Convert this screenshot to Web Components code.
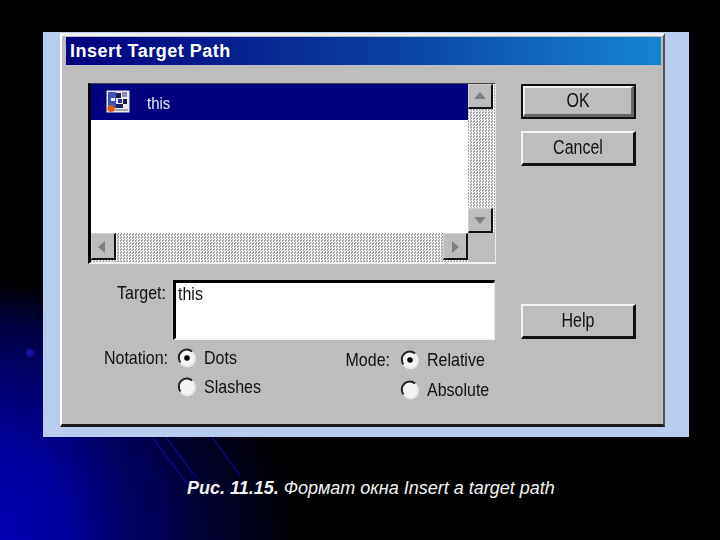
<!DOCTYPE html>
<html>
<head>
<meta charset="utf-8">
<title>Insert Target Path</title>
<style>
  html, body { margin: 0; background: #000; }
</style>
</head>
<body>
<slide-page>
  <picture-panel>
    <win-dialog title="Insert Target Path"></win-dialog>
  </picture-panel>
  <slide-caption>
    <b slot="num">Рис. 11.15.</b>
    <span slot="text">Формат окна Insert a target path</span>
  </slide-caption>
</slide-page>

<script>
const UI_FONT = '"Liberation Sans", Arial, sans-serif';
const SUNKEN = 'border-style: solid; border-width: 3px 1px 2px 3px; border-color: #000 #e8e8e8 #f4f4f4 #000;';

class SlidePage extends HTMLElement {
  constructor() {
    super();
    this.attachShadow({ mode: 'open' });
    this.shadowRoot.innerHTML = `
      <style>
        :host {
          display: block;
          position: relative;
          width: 720px;
          height: 540px;
          box-sizing: border-box;
          padding: 32px 31px 0 43px;
          overflow: hidden;
          background:
            radial-gradient(ellipse 190px 260px at 0px 540px, #0000b4 0%, #00009c 35%, #00005e 70%, rgba(0,0,40,0) 100%),
            radial-gradient(ellipse 300px 250px at 0px 540px, #00007a 0%, #000048 55%, rgba(0,0,0,0) 100%),
            #000;
        }
        svg { position: absolute; left: 0; top: 0; }
        .top { position: relative; }
      </style>
      <svg width="720" height="540" viewBox="0 0 720 540">
        <defs>
          <radialGradient id="dot">
            <stop offset="0" stop-color="#1a1ab0"/>
            <stop offset="0.55" stop-color="#10109a"/>
            <stop offset="1" stop-color="#000060" stop-opacity="0"/>
          </radialGradient>
        </defs>
        <circle cx="30" cy="353" r="6" fill="url(#dot)"/>
        <g fill="none" stroke="#0c0c9a" stroke-width="1.6" opacity=".7">
          <path d="M152 437 L192 490"/>
          <path d="M166 437 L196 478"/>
          <path d="M212 437 L240 476"/>
        </g>
      </svg>
      <div class="top"><slot></slot></div>
    `;
  }
}

class PicturePanel extends HTMLElement {
  constructor() {
    super();
    this.attachShadow({ mode: 'open' });
    this.shadowRoot.innerHTML = `
      <style>
        :host {
          display: block;
          width: 646px;
          height: 405px;
          box-sizing: border-box;
          padding: 1px 24px 10px 17px;
          background: #b8ccf0;
        }
      </style>
      <slot></slot>
    `;
  }
}

class WinDialog extends HTMLElement {
  constructor() {
    super();
    this.attachShadow({ mode: 'open' });
    this.shadowRoot.innerHTML = `
      <style>
        :host {
          display: block;
          box-sizing: border-box;
          height: 394px;
          background: #bdbdbd;
          border-style: solid;
          border-width: 3px 2px 3px 2px;
          border-color: #f0f0f0 #545454 #1a1a1a #fff;
          font-family: ${UI_FONT};
        }
        .title {
          margin: 1px 2px 0 4px;
          height: 28px;
          box-sizing: border-box;
          padding: 1px 0 0 4px;
          display: flex;
          align-items: center;
          background: linear-gradient(90deg, #000080 0%, #0a3a9c 50%, #1484d0 100%);
          color: #fff;
          font-weight: bold;
          font-size: 18px;
          letter-spacing: .5px;
        }
        .body {
          display: grid;
          grid-template-columns: 408px 115px;
          column-gap: 25px;
          padding: 18px 0 0 26px;
        }
        .left { display: flex; flex-direction: column; }
        .right { display: flex; flex-direction: column; gap: 12px; height: 255px; margin-top: 1px; }
        .right win-button:last-child { margin-top: auto; }
        .target { display: flex; margin-top: 16px; }
        .target-label {
          width: 78px;
          padding-top: 4px;
          text-align: right;
          margin-right: 7px;
        }
        .field {
          box-sizing: border-box;
          width: 322px;
          height: 60px;
          background: #fff;
          ${SUNKEN}
          padding: 2px 0 0 2px;
        }
        .options {
          display: grid;
          grid-template-columns: 75px 146px 76px auto;
          column-gap: 0;
          margin-top: 5px;
          padding-left: 5px;
        }
        .group-label { text-align: right; padding-top: 4px; }
        .group { display: flex; flex-direction: column; gap: 5px; padding: 1px 0 0 9px; }
        .group.mode { gap: 6px; padding: 3px 0 0 10px; }
        .group-label.mode { padding-top: 6px; }
        .t {
          display: inline-block;
          font-size: 16px;
          color: #111;
          transform: scaleY(1.2);
          filter: blur(.25px);
        }
      </style>
      <div class="title"><span>${this.getAttribute('title')}</span></div>
      <div class="body">
        <div class="left">
          <list-box></list-box>
          <div class="target">
            <div class="target-label"><span class="t">Target:</span></div>
            <div class="field"><span class="t">this</span></div>
          </div>
          <div class="options">
            <div class="group-label"><span class="t">Notation:</span></div>
            <div class="group">
              <radio-option checked>Dots</radio-option>
              <radio-option>Slashes</radio-option>
            </div>
            <div class="group-label mode"><span class="t">Mode:</span></div>
            <div class="group mode">
              <radio-option checked>Relative</radio-option>
              <radio-option>Absolute</radio-option>
            </div>
          </div>
        </div>
        <div class="right">
          <win-button default>OK</win-button>
          <win-button>Cancel</win-button>
          <win-button>Help</win-button>
        </div>
      </div>
    `;
  }
}

class ListBox extends HTMLElement {
  constructor() {
    super();
    this.attachShadow({ mode: 'open' });
    this.shadowRoot.innerHTML = `
      <style>
        :host {
          display: grid;
          box-sizing: border-box;
          width: 408px;
          height: 181px;
          ${SUNKEN}
          border-width: 1px 1px 2px 3px;
          border-top-color: #444;
          grid-template-columns: 1fr 27px;
          grid-template-rows: 1fr 29px;
          background: #fff;
        }
        .items { min-width: 0; }
        .row {
          height: 36px;
          background: #000080;
          color: #e8e8f0;
          display: flex;
          align-items: center;
          padding-left: 15px;
          gap: 17px;
        }
        .row svg { display: block; filter: blur(.4px); }
        .row span {
          font-size: 15px;
          transform: scaleY(1.1);
          filter: blur(.3px);
        }
        .track {
          background: repeating-conic-gradient(#f6f6f6 0 25%, #a4a4a4 0 50%) 0 0 / 3px 3px;
          display: flex;
          justify-content: space-between;
        }
        .track.v { flex-direction: column; }
        .corner { background: #bdbdbd; }
      </style>
      <div class="items">
        <div class="row">
          <svg width="24" height="24" viewBox="0 0 24 24">
            <rect x=".5" y=".5" width="23" height="22" fill="#e8e8ee"/>
            <rect x="2" y="2" width="8" height="16" fill="#3f54b8"/>
            <rect x="10" y="3" width="5" height="5" fill="#1c1c50"/>
            <rect x="16" y="2" width="5" height="5" fill="#8a8ab0"/>
            <rect x="12" y="9" width="4" height="4" fill="#30309a"/>
            <rect x="17" y="9" width="4" height="5" fill="#181838"/>
            <rect x="5" y="8" width="4" height="3" fill="#f0f0ff"/>
            <rect x="10" y="14" width="7" height="4" fill="#20205a"/>
            <rect x="3" y="19" width="19" height="2" fill="#a8a8b0"/>
            <circle cx="5" cy="18.5" r="3.6" fill="#e25a10"/>
          </svg>
          <span>this</span>
        </div>
      </div>
      <div class="track v">
        <scroll-arrow dir="up"></scroll-arrow>
        <scroll-arrow dir="down"></scroll-arrow>
      </div>
      <div class="track">
        <scroll-arrow dir="left"></scroll-arrow>
        <scroll-arrow dir="right"></scroll-arrow>
      </div>
      <div class="corner"></div>
    `;
  }
}

class ScrollArrow extends HTMLElement {
  constructor() {
    super();
    this.attachShadow({ mode: 'open' });
    const paths = {
      up: 'M9 4 L3 11 L15 11 Z',
      down: 'M3 5 L15 5 L9 12 Z',
      left: 'M11 3 L4 9 L11 15 Z',
      right: 'M6 3 L13 9 L6 15 Z'
    };
    const dir = this.getAttribute('dir');
    const flat = dir === 'left' || dir === 'right';
    this.shadowRoot.innerHTML = `
      <style>
        :host {
          display: flex;
          align-items: center;
          justify-content: center;
          box-sizing: border-box;
          width: 25px;
          height: ${flat ? 27 : 25}px;
          background: #bdbdbd;
          border-style: solid;
          border-width: 1px 2px 2px 1px;
          border-color: #cfcfcf #111 #111 #cfcfcf;
        }
      </style>
      <svg width="18" height="16" viewBox="0 0 18 16"><path d="${paths[dir]}" fill="#808080"/></svg>
    `;
  }
}

class WinButton extends HTMLElement {
  constructor() {
    super();
    this.attachShadow({ mode: 'open' });
    this.shadowRoot.innerHTML = `
      <style>
        :host {
          display: flex;
          align-items: center;
          justify-content: center;
          box-sizing: border-box;
          height: 35px;
          background: #bdbdbd;
          border-style: solid;
          border-width: 2px 3px 3px 2px;
          border-color: #f4f4f4 #111 #111 #f4f4f4;
          font-size: 16px;
          color: #111;
        }
        :host([default]) {
          outline: 2px solid #111;
          outline-offset: -2px;
          border-width: 4px 5px 5px 4px;
          border-color: #efefef #666 #666 #efefef;
        }
        span { display: inline-block; transform: scaleY(1.25); filter: blur(.25px); margin-top: -1px; }
      </style>
      <span><slot></slot></span>
    `;
  }
}

class RadioOption extends HTMLElement {
  constructor() {
    super();
    this.attachShadow({ mode: 'open' });
    const dot = this.hasAttribute('checked') ? '<circle cx="10" cy="10" r="2.8" fill="#000"/>' : '';
    this.shadowRoot.innerHTML = `
      <style>
        :host {
          display: flex;
          align-items: center;
          gap: 7px;
          height: 24px;
          font-size: 16px;
          color: #111;
        }
        svg { display: block; flex: none; }
        span { display: inline-block; transform: scaleY(1.2); filter: blur(.25px); }
      </style>
      <svg width="20" height="20" viewBox="0 0 20 20">
        <circle cx="10" cy="10" r="8.5" fill="#f4f4f4"/>
        <path d="M3.5 14.5 A8 8 0 0 1 15 3.5" fill="none" stroke="#222" stroke-width="2"/>
        <path d="M16.5 5.5 A8 8 0 0 1 5 16.5" fill="none" stroke="#e4e4e4" stroke-width="2"/>
        ${dot}
      </svg>
      <span><slot></slot></span>
    `;
  }
}

class SlideCaption extends HTMLElement {
  constructor() {
    super();
    this.attachShadow({ mode: 'open' });
    this.shadowRoot.innerHTML = `
      <style>
        :host {
          display: block;
          margin-top: 41px;
          padding-left: 144px;
          color: #f4f4f4;
          font: italic 18px ${UI_FONT};
          white-space: nowrap;
        }
      </style>
      <slot name="num"></slot>
      <slot name="text"></slot>
    `;
  }
}

customElements.define('slide-page', SlidePage);
customElements.define('picture-panel', PicturePanel);
customElements.define('scroll-arrow', ScrollArrow);
customElements.define('list-box', ListBox);
customElements.define('win-button', WinButton);
customElements.define('radio-option', RadioOption);
customElements.define('win-dialog', WinDialog);
customElements.define('slide-caption', SlideCaption);
</script>
</body>
</html>
